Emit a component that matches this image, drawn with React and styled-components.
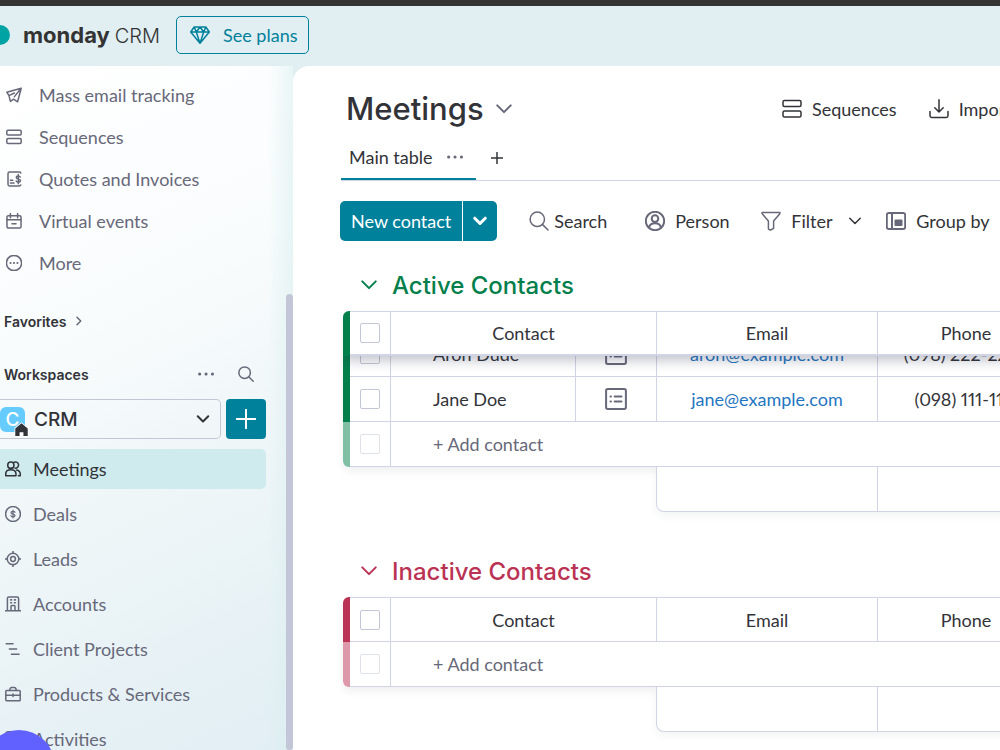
import styled, { createGlobalStyle, css } from "styled-components";

const colors = {
  text: "#323338",
  secondary: "#676879",
  primary: "#00819b",
  border: "#d0d4e4",
  surface: "#e1eef2",
  green: "#037f4c",
  greenLight: "#81bfa5",
  red: "#bb3354",
  redLight: "#dd99aa",
};

const icons = {
  send: <path d="M19 1.500 1 6.500l2.700 4.300L10.500 7.500M19 1.500 14.500 18.500l-5-3.200M19 1.500 10.500 12M3.700 10.800 5.500 18l4-2.700" />,
  sequences: (
    <>
      <rect x="1" y="1.500" width="18" height="6" rx="1.500" />
      <rect x="1" y="12" width="18" height="6" rx="1.500" />
    </>
  ),
  quote: (
    <>
      <path d="M18.500 2.500c-.3-.9-1-1.200-2-1.200h-12c-1 0-2 .8-2 2v13.400c0 1.200 1 2 2 2h12c1 0 1.700-.4 2-1.200M5.500 11.500h3M5.500 15h4.500" />
      <path d="M17.800 7.500c-.5-1-1.400-1.400-2.500-1.400-1.400 0-2.400.7-2.400 1.900 0 2.800 5.100 1.300 5.100 4 0 1.200-1 2-2.600 2-1.200 0-2.200-.5-2.700-1.500M15.400 4.300v11.500" />
    </>
  ),
  calendar: (
    <>
      <rect x="1.200" y="3.500" width="17.600" height="15.300" rx="1.800" />
      <path d="M1.200 8.500h17.600M5.500.8v5M14.500.8v5M7.500 13.300h5" />
    </>
  ),
  more: (
    <>
      <circle cx="10" cy="10" r="9.500" />
      <path d="M5.600 10h.2M9.900 10h.2M14.200 10h.2" strokeWidth="2.400" />
    </>
  ),
  dots: <path d="M2 10h.1M10 10h.1M18 10h.1" strokeWidth="3.800" />,
  search: (
    <>
      <circle cx="8.300" cy="8.300" r="7.200" />
      <path d="m13.400 13.400 5.600 5.600" />
    </>
  ),
  down: <path d="m2.500 6 7.500 7.500L17.500 6" />,
  right: <path d="m6 2.500 7.500 7.500L6 17.500" />,
  plus: <path d="M10 .8v18.400M.8 10h18.400" />,
  people: (
    <>
      <circle cx="7.300" cy="5.200" r="3.900" />
      <path d="M11 1.700a3.900 3.900 0 1 1 1.500 7.200M.9 18.500v-2.300c0-3.400 2.600-5.200 6.400-5.200s6.400 1.800 6.400 5.200v2.300H.9ZM14.500 11.300c2.700.6 4.600 2.300 4.600 5v2.200h-2.400" />
    </>
  ),
  dollar: (
    <>
      <circle cx="10" cy="10" r="9.300" />
      <path
        d="M12.500 7.900c-.5-.9-1.300-1.300-2.500-1.300-1.500 0-2.500.6-2.500 1.700 0 2.500 5 1 5 3.500 0 1.100-1 1.700-2.500 1.700-1.300 0-2.200-.5-2.700-1.400M10 5v10"
        strokeWidth="1.500"
      />
    </>
  ),
  target: (
    <>
      <circle cx="10" cy="10" r="7.200" />
      <circle cx="10" cy="10" r="3" />
      <path d="M10 0v3M10 17v3M0 10h3M17 10h3" />
    </>
  ),
  building: (
    <>
      <path d="M3 18.500V3c0-1 .7-1.700 1.700-1.700h10.600c1 0 1.700.7 1.700 1.700v15.500M.5 18.500h19M7.500 18.500V13c0-.6.400-1 1-1h3c.6 0 1 .4 1 1v5.500" />
      <path d="M7 4.900h1.200M11.800 4.900H13M7 8.500h1.200M11.800 8.500H13" strokeWidth="2" />
    </>
  ),
  project: <path d="M1.500 3.500h8.500M5.500 10h9M8 16.500h9.500" />,
  briefcase: (
    <>
      <rect x="1" y="5.500" width="18" height="13" rx="1" />
      <path d="M6 5.500c0-2.500 1-3.700 2.500-3.700h3c1.500 0 2.500 1.200 2.500 3.700M1 11.500h18M10 10v3" />
    </>
  ),
  gem: <path d="M4.200 2h11.600L19.300 7 10 18.300.7 7 4.200 2ZM.7 7h18.600M6.300 7 10 18.300 13.700 7M4.200 2l2.100 5L10 2l3.700 5 2.100-5" />,
  download: <path d="M10 .8v12M5.800 8.800l4.200 4.200 4.200-4.200M1 12.500v4.300c0 1 .7 1.700 1.700 1.700h14.600c1 0 1.700-.7 1.700-1.700v-4.300" />,
  person: (
    <>
      <circle cx="10" cy="10" r="9.200" />
      <circle cx="10" cy="7.600" r="3.300" />
      <path d="M4 16.500c.7-2.800 2.800-4.200 6-4.200s5.300 1.400 6 4.200" />
    </>
  ),
  filter: <path d="M1 1.500h18c0 .7-.2 1.200-.6 1.700L12.600 10v7.300l-3 1.700c-1.200 0-2.200-.6-2.200-1.700V10L1.600 3.200C1.200 2.700 1 2.200 1 1.500Z" />,
  group: (
    <>
      <rect x=".8" y="2" width="18.400" height="16" rx="2" />
      <path d="M6 2v16" />
      <path d="M9.500 9.500h6v4.500h-6z" fill="currentColor" />
    </>
  ),
  card: (
    <>
      <rect x="1" y="1" width="18" height="18" rx="1.500" />
      <path d="M5 7.800h.4M5 12.300h.4M8.800 7.800H15M8.800 12.300H15" />
    </>
  ),
  activity: <rect x="1" y="1" width="18" height="18" rx="3" />,
};

const Icon = ({ name, size = 16, stroke = 1.5, ...rest }) => (
  <Svg
    viewBox="0 0 20 20"
    width={size}
    height={size}
    strokeWidth={(stroke * 20) / size}
    aria-hidden="true"
    {...rest}
  >
    {icons[name]}
  </Svg>
);

const navItems = [
  { icon: "send", label: "Mass email tracking" },
  { icon: "sequences", label: "Sequences" },
  { icon: "quote", label: "Quotes and Invoices" },
  { icon: "calendar", label: "Virtual events" },
  { icon: "more", label: "More" },
];

const boards = [
  { icon: "people", label: "Meetings", active: true },
  { icon: "dollar", label: "Deals" },
  { icon: "target", label: "Leads" },
  { icon: "building", label: "Accounts" },
  { icon: "project", label: "Client Projects" },
  { icon: "briefcase", label: "Products & Services" },
  { icon: "activity", label: "Activities" },
];

const activeContacts = [
  { name: "Aron Dude", email: "aron@example.com", phone: "(098) 222-2222" },
  { name: "Jane Doe", email: "jane@example.com", phone: "(098) 111-1111" },
];

const Sidebar = () => (
  <Aside>
    <SidebarContent>
      <Nav>
        {navItems.map(({ icon, label }) => (
          <NavLink href="#" key={label}>
            <Icon name={icon} />
            {label}
          </NavLink>
        ))}
      </Nav>
      <SectionRow>
        Favorites
        <Icon name="right" size={10} color={colors.secondary} />
      </SectionRow>
      <SectionRow>
        <span>Workspaces</span>
        <SectionTools>
          <IconButton aria-label="Workspace options">
            <Icon name="dots" />
          </IconButton>
          <IconButton aria-label="Search workspace">
            <Icon name="search" />
          </IconButton>
        </SectionTools>
      </SectionRow>
      <WorkspaceRow>
        <WorkspaceButton>
          <WorkspaceLogo>
            C
            <HomeBadge viewBox="0 0 14 14" aria-hidden="true">
              <path
                d="M7 1.200 12.800 6v7H8.800V9.500H5.200V13H1.200V6L7 1.200Z"
                fill={colors.text}
                stroke="#fff"
                strokeWidth="1.500"
                paintOrder="stroke"
              />
            </HomeBadge>
          </WorkspaceLogo>
          <span>CRM</span>
          <Icon name="down" size={14} stroke={2} />
        </WorkspaceButton>
        <AddButton aria-label="Add item">
          <Icon name="plus" size={20} stroke={2} />
        </AddButton>
      </WorkspaceRow>
      <BoardList>
        {boards.map(({ icon, label, active }) => (
          <BoardLink href="#" key={label} $active={active}>
            <Icon name={icon} />
            {label}
          </BoardLink>
        ))}
      </BoardList>
    </SidebarContent>
    <ScrollTrack>
      <ScrollThumb />
    </ScrollTrack>
  </Aside>
);

const Group = ({ title, color, lightColor, rows = [] }) => (
  <GroupSection>
    <GroupTitle $color={color}>
      <Icon name="down" size={18} stroke={2} />
      {title}
    </GroupTitle>
    <Table>
      <thead>
        <HeadRow $color={color} $sticky={rows.length > 0}>
          <HeadCell>
            <Checkbox type="checkbox" aria-label={`Select all ${title}`} />
          </HeadCell>
          <HeadCell $span={2} colSpan={2}>
            Contact
          </HeadCell>
          <HeadCell>Email</HeadCell>
          <HeadCell>Phone</HeadCell>
        </HeadRow>
      </thead>
      <TableBody>
        {rows.map(({ name, email, phone }, index) => (
          <Row $color={color} $tucked={index === 0} key={name}>
            <Cell>
              <Checkbox type="checkbox" aria-label={`Select ${name}`} />
            </Cell>
            <Cell $start>{name}</Cell>
            <Cell $muted>
              <Icon name="card" size={22} stroke={2} />
            </Cell>
            <Cell>
              <MailLink href={`mailto:${email}`}>{email}</MailLink>
            </Cell>
            <Cell>{phone}</Cell>
          </Row>
        ))}
        <Row $color={lightColor}>
          <Cell>
            <Checkbox type="checkbox" disabled aria-label="Select new contact" />
          </Cell>
          <Cell $start $muted $span={4} colSpan={4}>
            + Add contact
          </Cell>
        </Row>
      </TableBody>
    </Table>
    <Summary>
      <SummaryCell />
      <SummaryCell />
    </Summary>
  </GroupSection>
);

const App = () => {
  return (
    <Page>
      <GlobalStyle />
      <TopBar>
        <Logo>
          <svg width="10" height="22" viewBox="0 0 10 22" aria-hidden="true">
            <circle cx="0" cy="11" r="10" fill="#00a3a3" />
          </svg>
          <Brand>
            <b>monday</b>
            <span>CRM</span>
          </Brand>
        </Logo>
        <PlansButton>
          <Icon name="gem" size={20} />
          See plans
        </PlansButton>
      </TopBar>
      <Body>
        <Sidebar />
        <Main>
          <BoardHeader>
            <BoardTitle>
              Meetings
              <Icon name="down" size={18} stroke={2} />
            </BoardTitle>
            <HeaderActions>
              <TextButton>
                <Icon name="sequences" size={20} />
                Sequences
              </TextButton>
              <TextButton>
                <Icon name="download" size={20} />
                Import
              </TextButton>
            </HeaderActions>
          </BoardHeader>
          <Tabs>
            <Tab>
              Main table
              <Icon name="dots" />
            </Tab>
            <AddTab aria-label="Add view">
              <Icon name="plus" size={12} />
            </AddTab>
          </Tabs>
          <Toolbar>
            <SplitButton>
              <NewButton>New contact</NewButton>
              <MenuButton aria-label="More ways to add">
                <Icon name="down" size={14} stroke={3} />
              </MenuButton>
            </SplitButton>
            <Tools>
              <TextButton $tool $tight>
                <Icon name="search" size={20} />
                Search
              </TextButton>
              <TextButton $tool>
                <Icon name="person" size={20} stroke={2} />
                Person
              </TextButton>
              <FilterTool>
                <TextButton $tool>
                  <Icon name="filter" size={20} />
                  Filter
                </TextButton>
                <IconButton aria-label="Filter options">
                  <Icon name="down" size={14} color={colors.text} />
                </IconButton>
              </FilterTool>
              <TextButton $tool>
                <Icon name="group" size={20} stroke={2} />
                Group by
              </TextButton>
            </Tools>
          </Toolbar>
          <Group
            title="Active Contacts"
            color={colors.green}
            lightColor={colors.greenLight}
            rows={activeContacts}
          />
          <Group
            title="Inactive Contacts"
            color={colors.red}
            lightColor={colors.redLight}
          />
        </Main>
      </Body>
      <HelpBubble aria-label="Help" />
    </Page>
  );
};
export default App;

const GlobalStyle = createGlobalStyle`
  * {
    box-sizing: border-box;
  }
  body {
    margin: 0;
    overflow: hidden;
    font-family: Lato, "Liberation Sans", sans-serif;
    font-size: 18px;
    font-variant-numeric: proportional-nums;
    color: ${colors.text};
  }
  button {
    font: inherit;
    color: inherit;
    background: none;
    border: 0;
    padding: 0;
    white-space: nowrap;
  }
  a {
    text-decoration: none;
  }
`;

const headingFont = `Inter, "Liberation Sans", sans-serif`;

const Svg = styled.svg`
  flex: none;
  display: block;
  fill: none;
  stroke: currentColor;
  stroke-linecap: round;
  stroke-linejoin: round;
`;

const Page = styled.div`
  height: 100vh;
  display: flex;
  flex-direction: column;
  background-color: ${colors.surface};
  border-top: 6px solid #333333;
`;

const TopBar = styled.header`
  display: flex;
  align-items: center;
  flex: none;
  height: 60px;
  padding-bottom: 2px;
  column-gap: 16px;
`;

const Logo = styled.div`
  display: flex;
  align-items: center;
  column-gap: 13px;
`;

const Brand = styled.div`
  display: flex;
  align-items: baseline;
  column-gap: 5px;
  font-family: ${headingFont};
  font-size: 20px;
  line-height: 28px;
  font-weight: 300;
  color: #333333;
  b {
    font-size: 22px;
    font-weight: 700;
  }
`;

const PlansButton = styled.button`
  display: flex;
  align-items: center;
  height: 38px;
  padding: 0 10px 0 13px;
  column-gap: 13px;
  border: 1px solid ${colors.primary};
  border-radius: 5px;
  color: ${colors.primary};
`;

const Body = styled.div`
  display: flex;
  flex: 1;
  min-height: 0;
`;

const Aside = styled.aside`
  display: flex;
  flex: none;
  width: 293px;
  overflow: hidden;
  background:
    linear-gradient(90deg, transparent 268px, rgba(214, 237, 237, 0.5) 293px),
    linear-gradient(155deg, #ffffff 0%, #f9fcfd 35%, #eff6f8 60%, #e1eef3 100%);
`;

const SidebarContent = styled.div`
  flex: 1;
  padding-right: 20px;
`;

const Nav = styled.nav`
  display: flex;
  flex-direction: column;
  padding-top: 8px;
`;

const NavLink = styled.a`
  display: flex;
  align-items: center;
  column-gap: 17px;
  height: 42px;
  padding-left: 6px;
  color: ${colors.secondary};
`;

const SectionRow = styled.div`
  display: flex;
  align-items: center;
  column-gap: 8px;
  height: 32px;
  margin-top: 21px;
  padding-left: 4px;
  font-family: ${headingFont};
  font-size: 14px;
  font-weight: 600;
`;

const SectionTools = styled.div`
  display: flex;
  margin-left: auto;
  padding-right: 12px;
  column-gap: 24px;
`;

const IconButton = styled.button`
  color: ${colors.secondary};
`;

const WorkspaceRow = styled.div`
  display: flex;
  column-gap: 5px;
  margin-top: 9px;
`;

const WorkspaceButton = styled.button`
  flex: 1;
  display: flex;
  align-items: center;
  height: 40px;
  column-gap: 9px;
  padding-right: 10px;
  border: 1px solid #c3c6d4;
  border-left: 0;
  border-radius: 0 5px 5px 0;
  font-family: ${headingFont};
  font-size: 19px;
  font-weight: 500;
  > svg {
    margin-left: auto;
  }
`;

const WorkspaceLogo = styled.span`
  position: relative;
  display: flex;
  align-items: center;
  justify-content: center;
  width: 25px;
  height: 25px;
  border-radius: 6px;
  background-color: #66ccff;
  color: #ffffff;
`;

const HomeBadge = styled.svg`
  position: absolute;
  right: -4px;
  bottom: -5px;
  width: 15px;
  height: 15px;
`;

const AddButton = styled.button`
  display: flex;
  align-items: center;
  justify-content: center;
  width: 40px;
  height: 40px;
  border-radius: 4px;
  background-color: ${colors.primary};
  color: #ffffff;
`;

const BoardList = styled.nav`
  display: flex;
  flex-direction: column;
  row-gap: 5px;
  margin-top: 10px;
`;

const BoardLink = styled.a`
  display: flex;
  align-items: center;
  column-gap: 12px;
  height: 40px;
  padding-left: 5px;
  border-radius: 0 5px 5px 0;
  color: ${({ $active }) => ($active ? colors.text : colors.secondary)};
  background-color: ${({ $active }) => ($active ? "#cfebed" : "transparent")};
`;

const ScrollTrack = styled.div`
  display: flex;
  width: 7px;
  padding-top: 228px;
`;

const ScrollThumb = styled.div`
  flex: 1;
  border-radius: 4px;
  background-color: #c3c6d6;
`;

const Main = styled.main`
  flex: 1;
  min-width: 0;
  overflow: hidden;
  padding: 16px 0 0 47px;
  border-radius: 16px 0 0 0;
  background-color: #ffffff;
`;

const BoardHeader = styled.div`
  display: grid;
  grid-template-columns: 436px auto;
  align-items: center;
  height: 54px;
  padding-left: 6px;
`;

const BoardTitle = styled.h1`
  display: flex;
  align-items: center;
  column-gap: 11px;
  margin: 0;
  font-family: ${headingFont};
  font-size: 31px;
  line-height: 40px;
  font-weight: 500;
  svg {
    color: ${colors.secondary};
  }
`;

const HeaderActions = styled.div`
  display: flex;
  column-gap: 32px;
`;

const TextButton = styled.button`
  display: flex;
  align-items: center;
  column-gap: ${({ $tight }) => ($tight ? 5 : 10)}px;
  svg {
    color: ${({ $tool }) => ($tool ? colors.secondary : colors.text)};
  }
`;

const Tabs = styled.div`
  display: flex;
  height: 45px;
  margin-left: 1px;
  border-bottom: 1px solid ${colors.border};
`;

const Tab = styled.button`
  display: flex;
  align-items: center;
  column-gap: 14px;
  height: 44px;
  padding: 0 13px 0 8px;
  border-bottom: 2px solid ${colors.primary};
  svg {
    color: ${colors.secondary};
  }
`;

const AddTab = styled.button`
  padding: 0 15px;
`;

const Toolbar = styled.div`
  display: flex;
  align-items: center;
  column-gap: 32px;
  margin: 20px 0 24px;
`;

const SplitButton = styled.div`
  display: flex;
  flex: none;
  column-gap: 1px;
  border-radius: 5px;
  overflow: hidden;
`;

const NewButton = styled.button`
  height: 40px;
  padding: 0 11px;
  background-color: ${colors.primary};
  color: #ffffff;
`;

const MenuButton = styled(NewButton)`
  padding: 0 10px;
`;

const Tools = styled.div`
  display: grid;
  grid-template-columns: 116px 116px 125px auto;
`;

const FilterTool = styled.div`
  display: flex;
  align-items: center;
  column-gap: 16px;
`;

const GroupSection = styled.section`
  width: 712px;
  margin: 0 0 39px 3px;
`;

const GroupTitle = styled.h2`
  display: flex;
  align-items: center;
  column-gap: 14px;
  height: 40px;
  margin: 0 0 6px;
  padding-left: 17px;
  font-family: ${headingFont};
  font-size: 24px;
  font-weight: 500;
  color: ${({ $color }) => $color};
`;

const Table = styled.table`
  display: block;
  border-radius: 6px;
  overflow: hidden;
  box-shadow: 0 4px 8px rgba(29, 33, 40, 0.07);
  thead {
    display: block;
    position: relative;
  }
`;

const TableBody = styled.tbody`
  display: block;
`;

const Cell = styled.td`
  display: flex;
  align-items: center;
  justify-content: ${({ $start }) => ($start ? "flex-start" : "center")};
  grid-column: span ${({ $span }) => $span || 1};
  padding: 0 0 0 ${({ $start }) => ($start ? 42 : 0)}px;
  color: ${({ $muted }) => ($muted ? colors.secondary : colors.text)};
  background-color: #ffffff;
  border: 0 solid ${colors.border};
  border-right-width: 1px;
  border-bottom-width: 1px;
`;

const HeadCell = styled(Cell).attrs({ as: "th" })`
  font-weight: 400;
  border-top-width: 1px;
`;

// the row colour shows through the left padding as the group bar
const rowGrid = css`
  display: grid;
  grid-template-columns: 41px 185px 81px 221px auto;
  height: 45px;
  padding-left: 7px;
  background-color: ${({ $color }) => $color};
`;

const HeadRow = styled.tr`
  ${rowGrid}
  ${({ $sticky }) =>
    $sticky &&
    css`
      position: relative;
      z-index: 1;
      box-shadow: 0 4px 12px rgba(41, 47, 76, 0.3);
      ${HeadCell} {
        border-bottom-width: 2px;
      }
    `}
`;

// the first row is scrolled part of the way under the sticky head
const Row = styled.tr`
  ${rowGrid}
  margin-top: ${({ $tucked }) => ($tucked ? "-24px" : 0)};
`;

const Checkbox = styled.input`
  appearance: none;
  width: 20px;
  height: 20px;
  margin: 0;
  border: 1px solid #c3c6d4;
  border-radius: 2px;
  background-color: #ffffff;
  &:disabled {
    opacity: 0.5;
  }
`;

const MailLink = styled.a`
  color: #1f76c2;
`;

const Summary = styled.div`
  position: relative;
  display: grid;
  grid-template-columns: 221px auto;
  height: 45px;
  margin-left: 313px;
  border: 1px solid ${colors.border};
  border-top: 0;
  border-radius: 0 0 0 8px;
  background-color: #ffffff;
  box-shadow: 0 4px 8px rgba(29, 33, 40, 0.05);
`;

const SummaryCell = styled.div`
  border-right: 1px solid ${colors.border};
`;

const HelpBubble = styled.button`
  position: fixed;
  left: -17px;
  bottom: -52px;
  width: 72px;
  height: 72px;
  border-radius: 50%;
  background-color: #6161ff;
`;
